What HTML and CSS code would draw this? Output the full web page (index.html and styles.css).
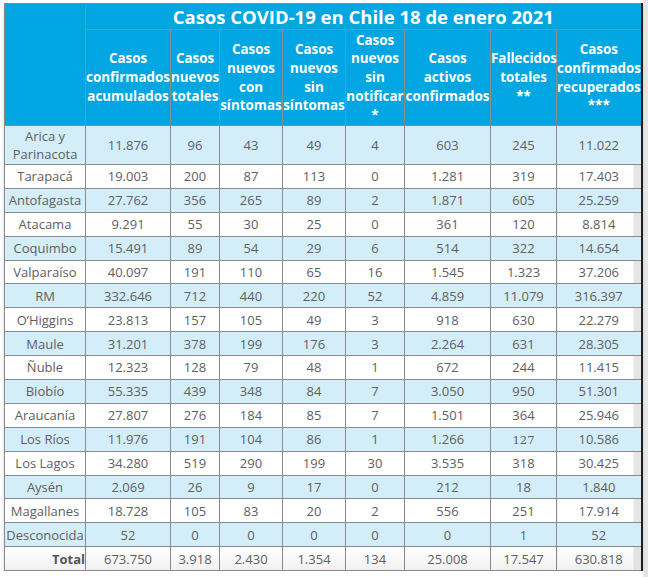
FILE: index.html
```html
<!DOCTYPE html>
<html lang="es">
<head>
<meta charset="utf-8">
<title>Casos COVID-19 en Chile 18 de enero 2021</title>
<link rel="stylesheet" href="styles.css">
</head>
<body>
<div class="wrap">
<table class="covid">
  <colgroup>
    <col class="c1"><col class="c2"><col class="c3"><col class="c4"><col class="c5"><col class="c6"><col class="c7"><col class="c8"><col class="c9">
  </colgroup>
  <thead>
    <tr class="title-row">
      <th rowspan="2" class="corner"></th>
      <th colspan="8" class="title">Casos COVID-19 en Chile 18 de enero 2021</th>
    </tr>
    <tr class="head-row">
      <th>Casos<br>confirmados<br>acumulados</th>
      <th>Casos<br>nuevos<br>totales</th>
      <th>Casos<br>nuevos<br>con<br>síntomas</th>
      <th>Casos<br>nuevos<br>sin<br>síntomas</th>
      <th>Casos<br>nuevos<br>sin<br>notificar<br>*</th>
      <th>Casos<br>activos<br>confirmados</th>
      <th>Fallecidos<br>totales<br>**</th>
      <th>Casos<br>confirmados<br>recuperados<br>***</th>
    </tr>
  </thead>
  <tbody>
    <tr class="alt tall"><td class="region">Arica y<br>Parinacota</td><td>11.876</td><td>96</td><td>43</td><td>49</td><td>4</td><td>603</td><td>245</td><td>11.022</td></tr>
    <tr><td class="region">Tarapacá</td><td>19.003</td><td>200</td><td>87</td><td>113</td><td>0</td><td>1.281</td><td>319</td><td class="last">17.403</td></tr>
    <tr class="alt"><td class="region">Antofagasta</td><td>27.762</td><td>356</td><td>265</td><td>89</td><td>2</td><td>1.871</td><td>605</td><td class="last">25.259</td></tr>
    <tr><td class="region">Atacama</td><td>9.291</td><td>55</td><td>30</td><td>25</td><td>0</td><td>361</td><td>120</td><td class="last">8.814</td></tr>
    <tr class="alt"><td class="region">Coquimbo</td><td>15.491</td><td>89</td><td>54</td><td>29</td><td>6</td><td>514</td><td>322</td><td class="last">14.654</td></tr>
    <tr><td class="region">Valparaíso</td><td>40.097</td><td>191</td><td>110</td><td>65</td><td>16</td><td>1.545</td><td>1.323</td><td class="last">37.206</td></tr>
    <tr class="alt"><td class="region">RM</td><td>332.646</td><td>712</td><td>440</td><td>220</td><td>52</td><td>4.859</td><td>11.079</td><td class="last">316.397</td></tr>
    <tr><td class="region">O’Higgins</td><td>23.813</td><td>157</td><td>105</td><td>49</td><td>3</td><td>918</td><td>630</td><td class="last">22.279</td></tr>
    <tr class="alt"><td class="region">Maule</td><td>31.201</td><td>378</td><td>199</td><td>176</td><td>3</td><td>2.264</td><td>631</td><td class="last">28.305</td></tr>
    <tr><td class="region">Ñuble</td><td>12.323</td><td>128</td><td>79</td><td>48</td><td>1</td><td>672</td><td>244</td><td class="last">11.415</td></tr>
    <tr class="alt"><td class="region">Biobío</td><td>55.335</td><td>439</td><td>348</td><td>84</td><td>7</td><td>3.050</td><td>950</td><td class="last">51.301</td></tr>
    <tr><td class="region">Araucanía</td><td>27.807</td><td>276</td><td>184</td><td>85</td><td>7</td><td>1.501</td><td>364</td><td class="last">25.946</td></tr>
    <tr class="alt"><td class="region">Los Ríos</td><td>11.976</td><td>191</td><td>104</td><td>86</td><td>1</td><td>1.266</td><td><span class="odd">127</span></td><td class="last">10.586</td></tr>
    <tr><td class="region">Los Lagos</td><td>34.280</td><td>519</td><td>290</td><td>199</td><td>30</td><td>3.535</td><td>318</td><td class="last">30.425</td></tr>
    <tr class="alt"><td class="region">Aysén</td><td>2.069</td><td>26</td><td>9</td><td>17</td><td>0</td><td>212</td><td>18</td><td class="last">1.840</td></tr>
    <tr><td class="region">Magallanes</td><td>18.728</td><td>105</td><td>83</td><td>20</td><td>2</td><td>556</td><td>251</td><td class="last">17.914</td></tr>
    <tr class="alt"><td class="region">Desconocida</td><td>52</td><td>0</td><td>0</td><td>0</td><td>0</td><td>0</td><td>1</td><td class="last">52</td></tr>
    <tr class="total"><td class="region total-label">Total</td><td>673.750</td><td>3.918</td><td>2.430</td><td>1.354</td><td>134</td><td>25.008</td><td>17.547</td><td class="last">630.818</td></tr>
  </tbody>
</table>
</div>
</body>
</html>
```
FILE: styles.css
```css
html {
  background: linear-gradient(to right, #ffffff 643px, #e6e6e6 643px);
}
body {
  margin: 0;
  font-family: "Open Sans", "Noto Sans", "Liberation Sans", sans-serif;
}
.wrap {
  margin: 3px 0 0 4px;
  width: 638px;
  box-shadow: 0 3px 4px rgba(0, 0, 0, 0.16);
}
.covid {
  border-collapse: collapse;
  table-layout: fixed;
  width: 638px;
  border: 1px solid #1e1e1e;
  border-right-width: 2px;
}
.c1 { width: 81px; }
.c2 { width: 85px; }
.c3 { width: 49px; }
.c4 { width: 63px; }
.c5 { width: 63px; }
.c6 { width: 59px; }
.c7 { width: 86px; }
.c8 { width: 66px; }
.c9 { width: 85px; }

.covid th {
  background: #01a6e2;
  color: #ffffff;
  font-weight: 700;
  border: 1px solid #8a8a8a;
  padding: 0;
  white-space: nowrap;
  text-align: center;
  vertical-align: middle;
}
.title-row th { height: 25px; }
.covid th.title {
  font-size: 18.5px;
  line-height: 24px;
}
.head-row th {
  height: 95px;
  font-size: 13.4px;
  line-height: 18.8px;
}
.covid td {
  border: 1px solid #8a8a8a;
  padding: 0;
  height: 22.9px;
  font-size: 13px;
  line-height: 18.3px;
  color: #606060;
  text-align: center;
  vertical-align: middle;
  white-space: nowrap;
  background: #ffffff;
}
.covid tr.tall td { height: 38px; }
.covid tr.alt td { background: #d3eef9; }
.covid td.last {
  background: linear-gradient(to right, #ffffff calc(100% - 8px), #e5e5e5 calc(100% - 8px));
}
.covid tr.alt td.last { background: #d3eef9; }
.covid tr.total td {
  background: linear-gradient(to bottom, #ffffff, #f0f0f0);
}
.covid tr.total td.last {
  background: linear-gradient(to right, transparent calc(100% - 8px), #e2e2e2 calc(100% - 8px)),
              linear-gradient(to bottom, #ffffff, #f0f0f0);
}
.covid td.total-label {
  text-align: right;
  font-weight: 700;
  color: #555555;
}
.odd {
  font-family: "DejaVu Serif", "Liberation Serif", serif;
  font-size: 11.5px;
}
```
